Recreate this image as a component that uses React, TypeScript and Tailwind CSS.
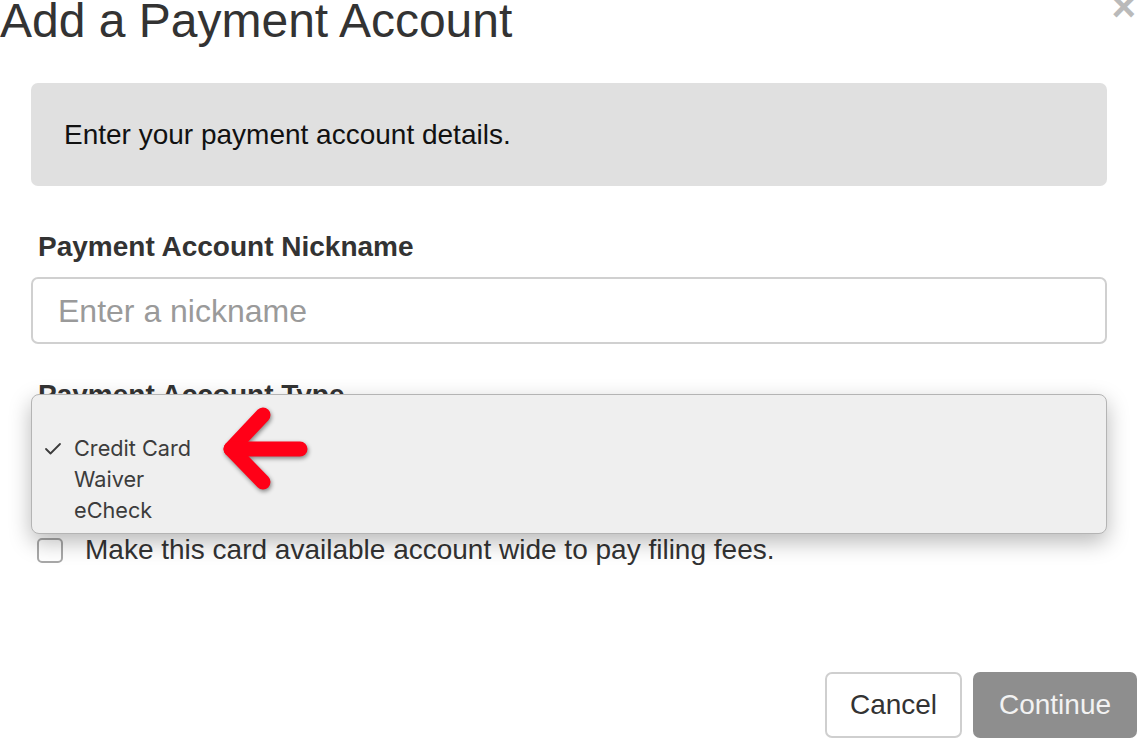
import React from "react";

export default function App() {
  return (
    <div
      className="w-[1138px] h-[740px] overflow-hidden bg-white text-[#333]"
      style={{ fontFamily: '"Liberation Sans", Arial, sans-serif' }}
    >
      <div className="flex items-start justify-between">
        <h1 className="-mt-[3px] text-[48px] leading-[48px] font-normal text-[#333]">
          Add a Payment Account
        </h1>
        <button className="-mt-[14px] mr-[2px] text-[42px] leading-[42px] font-bold text-[#bababa]">
          ×
        </button>
      </div>

      <div className="px-[31px]">
        <div className="mt-[38px] flex h-[103px] items-center rounded-[7px] bg-[#e0e0e0] px-[33px] text-[28px] leading-[40px] text-[#111]">
          Enter your payment account details.
        </div>

        <div className="mt-[47px] pl-[7px] text-[28px] leading-[28px] font-bold text-[#333]">
          Payment Account Nickname
        </div>
        <div className="mt-[16px] flex h-[67px] items-center rounded-[7px] border-2 border-[#d0d0d0] px-[25px] text-[32px] text-[#9a9a9a]">
          Enter a nickname
        </div>

        <div className="relative">
          <div className="mt-[37px] pl-[7px] text-[28px] leading-[28px] font-bold text-[#333]">
            Payment Account Type
          </div>
          <div className="mt-[16px] h-[67px] rounded-[7px] border-2 border-[#d0d0d0]" />

          <div className="mt-[44px] flex items-center gap-[22px] pl-[6px]">
            <div className="h-[25px] w-[26px] rounded-[5px] border-2 border-[#a8a8a8] bg-white" />
            <span className="text-[28px] leading-[28px] text-[#333]">
              Make this card available account wide to pay filing fees.
            </span>
          </div>

          {/* native select popup */}
          <div
            className="absolute left-0 right-0 top-[13px] h-[140px] rounded-[8px] border border-[#b4b4b4] bg-[#efefef] pt-[38px] shadow-[0_8px_22px_rgba(0,0,0,0.28)]"
            style={{ fontFamily: 'Inter, "Noto Sans", sans-serif' }}
          >
            <div className="flex h-[31px] items-center text-[21.7px] text-[#3c3c3c]">
              <svg width="42" height="31" viewBox="0 0 42 31" className="shrink-0">
                <polyline
                  points="14,16 18.5,20.5 28,11"
                  fill="none"
                  stroke="#3c3c3c"
                  strokeWidth="1.8"
                  strokeLinecap="round"
                  strokeLinejoin="round"
                />
              </svg>
              <span>Credit Card</span>
            </div>
            <div className="flex h-[31px] items-center pl-[42px] text-[21.7px] text-[#3c3c3c]">
              Waiver
            </div>
            <div className="flex h-[31px] items-center pl-[42px] text-[21.7px] text-[#3c3c3c]">
              eCheck
            </div>

            <svg
              width="110"
              height="110"
              viewBox="0 0 110 110"
              className="absolute left-[180px] top-[0px]"
              style={{ filter: "drop-shadow(1px 2px 2px rgba(0,0,0,0.45))" }}
            >
              <polyline
                points="51,20 19,54 51,87"
                fill="none"
                stroke="#ff0017"
                strokeWidth="15"
                strokeLinecap="round"
                strokeLinejoin="round"
              />
              <line
                x1="19"
                y1="54"
                x2="88"
                y2="54"
                stroke="#ff0017"
                strokeWidth="15"
                strokeLinecap="round"
              />
            </svg>
          </div>
        </div>
      </div>

      <div className="mt-[108px] flex justify-end gap-[11px] pr-[1px]">
        <button className="flex h-[66px] w-[137px] items-center justify-center rounded-[7px] border-2 border-[#cfcfcf] bg-white text-[28px] text-[#333]">
          Cancel
        </button>
        <button className="flex h-[66px] w-[164px] items-center justify-center rounded-[7px] bg-[#8e8e8e] text-[28px] text-[#f2f2f2]">
          Continue
        </button>
      </div>
    </div>
  );
}
